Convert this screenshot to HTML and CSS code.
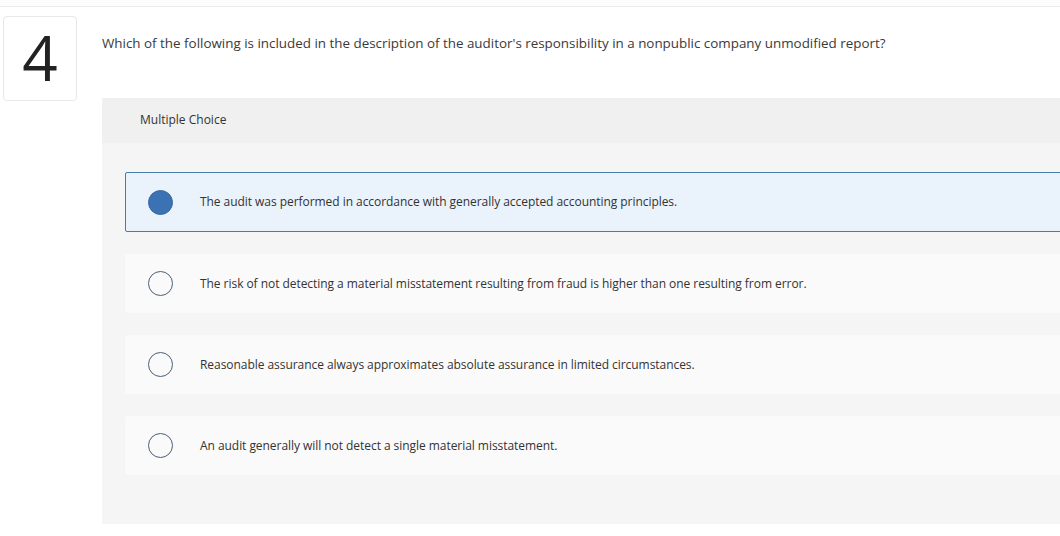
FILE: index.html
```html
<!DOCTYPE html>
<html>
<head>
<meta charset="utf-8">
<link rel="stylesheet" href="styles.css">
</head>
<body>
<div class="page">
  <div class="topline"></div>
  <div class="question">
    <div class="qnum">4</div>
    <div class="qbody">
      <p class="prompt">Which of the following is included in the description of the auditor's responsibility in a nonpublic company unmodified report?</p>
      <div class="panel">
        <div class="panel-head">Multiple Choice</div>
        <div class="panel-body">
          <div class="option selected"><span class="radio"></span><span class="otext">The audit was performed in accordance with generally accepted accounting principles.</span></div>
          <div class="option"><span class="radio"></span><span class="otext">The risk of not detecting a material misstatement resulting from fraud is higher than one resulting from error.</span></div>
          <div class="option"><span class="radio"></span><span class="otext">Reasonable assurance always approximates absolute assurance in limited circumstances.</span></div>
          <div class="option"><span class="radio"></span><span class="otext">An audit generally will not detect a single material misstatement.</span></div>
        </div>
      </div>
    </div>
  </div>
</div>
</body>
</html>
```
FILE: styles.css
```css
html, body {
  margin: 0;
  padding: 0;
  background: #ffffff;
  overflow: hidden;
}
.page {
  width: 1060px;
  height: 536px;
  overflow: hidden;
  font-family: "Open Sans", "DejaVu Sans", sans-serif;
  color: #333333;
}
.topline {
  height: 6px;
  border-bottom: 1px solid #ececec;
  background: #fdfdfd;
}
.question {
  display: flex;
  align-items: flex-start;
  padding-top: 9px;
}
.qnum {
  margin-left: 3px;
  flex: 0 0 74px;
  width: 74px;
  height: 85px;
  box-sizing: border-box;
  border: 1px solid #e8e8e8;
  border-radius: 4px;
  display: flex;
  align-items: center;
  justify-content: center;
  font-family: "Open Sans", sans-serif;
  font-weight: 380;
  font-size: 62px;
  color: #222222;
  line-height: 1;
  padding-bottom: 4px;
}
.qbody {
  margin-left: 25px;
  flex: 0 0 auto;
}
.prompt {
  margin: 0;
  padding-top: 18px;
  font-size: 13.4px;
  line-height: 18px;
  color: #3a3a3a;
  height: 64px;
}
.panel {
  width: 1000px;
  background: #f5f5f5;
  padding-bottom: 49px;
}
.panel-head {
  height: 45px;
  background: #f0f0f0;
  padding-left: 38px;
  padding-bottom: 2px;
  box-sizing: border-box;
  display: flex;
  align-items: center;
  font-size: 12px;
  color: #333333;
}
.panel-body {
  padding: 29px 0 0 23px;
  display: flex;
  flex-direction: column;
  gap: 22px;
}
.option {
  height: 59px;
  box-sizing: border-box;
  background: #fafafa;
  border-radius: 2px;
  display: flex;
  align-items: center;
  padding-left: 23px;
}
.option.selected {
  background: #eaf2fb;
  border: 1px solid #4a7aa8;
  padding-left: 22px;
  height: 60px;
}
.radio {
  width: 25px;
  height: 25px;
  box-sizing: border-box;
  border-radius: 50%;
  border: 1.5px solid #4a5f78;
  flex: 0 0 auto;
}
.option.selected .radio {
  background: #3a72b4;
  border-color: #3868a4;
}
.otext {
  margin-left: 27px;
  font-size: 12px;
  letter-spacing: -0.05px;
  color: #333333;
  padding-bottom: 1px;
}
```
